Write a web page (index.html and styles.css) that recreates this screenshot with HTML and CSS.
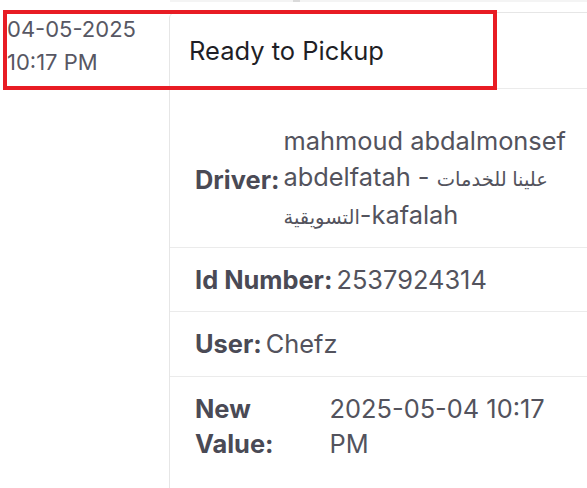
FILE: index.html
```html
<!DOCTYPE html>
<html lang="en">
<head>
<meta charset="utf-8">
<link rel="stylesheet" href="styles.css">
</head>
<body>
<div class="page">
  <div class="prev"><div class="prev-mark"></div></div>
  <div class="timeline">
    <div class="date">
      <div>04-05-2025</div>
      <div>10:17 PM</div>
    </div>
    <div class="card">
      <div class="card-head">Ready to Pickup</div>
      <div class="card-body">
        <div class="row row-first">
          <span class="label">Driver:</span>
          <span class="value">mahmoud abdalmonsef abdelfatah - <span class="ar">علينا للخدمات التسويقية</span>-kafalah</span>
        </div>
        <div class="row">
          <span class="label">Id Number:</span>
          <span class="value">2537924314</span>
        </div>
        <div class="row">
          <span class="label">User:</span>
          <span class="value">Chefz</span>
        </div>
        <div class="row row-last">
          <span class="label">New Value:</span>
          <span class="value">2025-05-04 10:17 PM</span>
        </div>
      </div>
    </div>
  </div>
  <div class="highlight"></div>
</div>
</body>
</html>
```

FILE: styles.css
```css
html, body {
  margin: 0;
  padding: 0;
  background: #ffffff;
  overflow: hidden;
}

body {
  font-family: Inter, "Noto Sans", "DejaVu Sans", sans-serif;
  width: 587px;
  height: 488px;
}

.page {
  position: relative;
  width: 587px;
  height: 488px;
  overflow: hidden;
}

.prev {
  height: 2px;
  margin-left: 170px;
  background: #f4f4f4;
}

.prev-mark {
  margin-left: 123px;
  width: 7px;
  height: 2px;
  background: #dadada;
}

.timeline {
  display: flex;
  padding-top: 10px;
}

.date {
  width: 169px;
  flex-shrink: 0;
  box-sizing: border-box;
  padding: 1px 0 0 7px;
  font-size: 22px;
  line-height: 33px;
  color: #575763;
}

.card {
  width: 430px;
  flex-shrink: 0;
  border: 1px solid #e6e6e6;
  border-radius: 6px 0 0 0;
}

.card-head {
  height: 75px;
  display: flex;
  align-items: center;
  padding-left: 19px;
  font-size: 25.5px;
  color: #1f1f26;
  border-bottom: 1px solid #ebebeb;
}

.card-body {
  padding: 20px 0 40px;
}

.row {
  display: flex;
  align-items: center;
  gap: 4px;
  padding: 14px 27px 14px 25px;
  border-bottom: 1px solid #ebebeb;
  font-size: 25.4px;
  line-height: 35.5px;
  color: #53535d;
}

.row-first {
  padding-bottom: 11px;
}

.row-last {
  border-bottom: none;
}

.label {
  font-weight: 700;
  color: #4a4a55;
}

.ar {
  font-size: 19.5px;
}

.highlight {
  position: absolute;
  left: 3px;
  top: 10px;
  width: 494px;
  height: 80px;
  box-sizing: border-box;
  border: 4px solid #e81c24;
}
```
